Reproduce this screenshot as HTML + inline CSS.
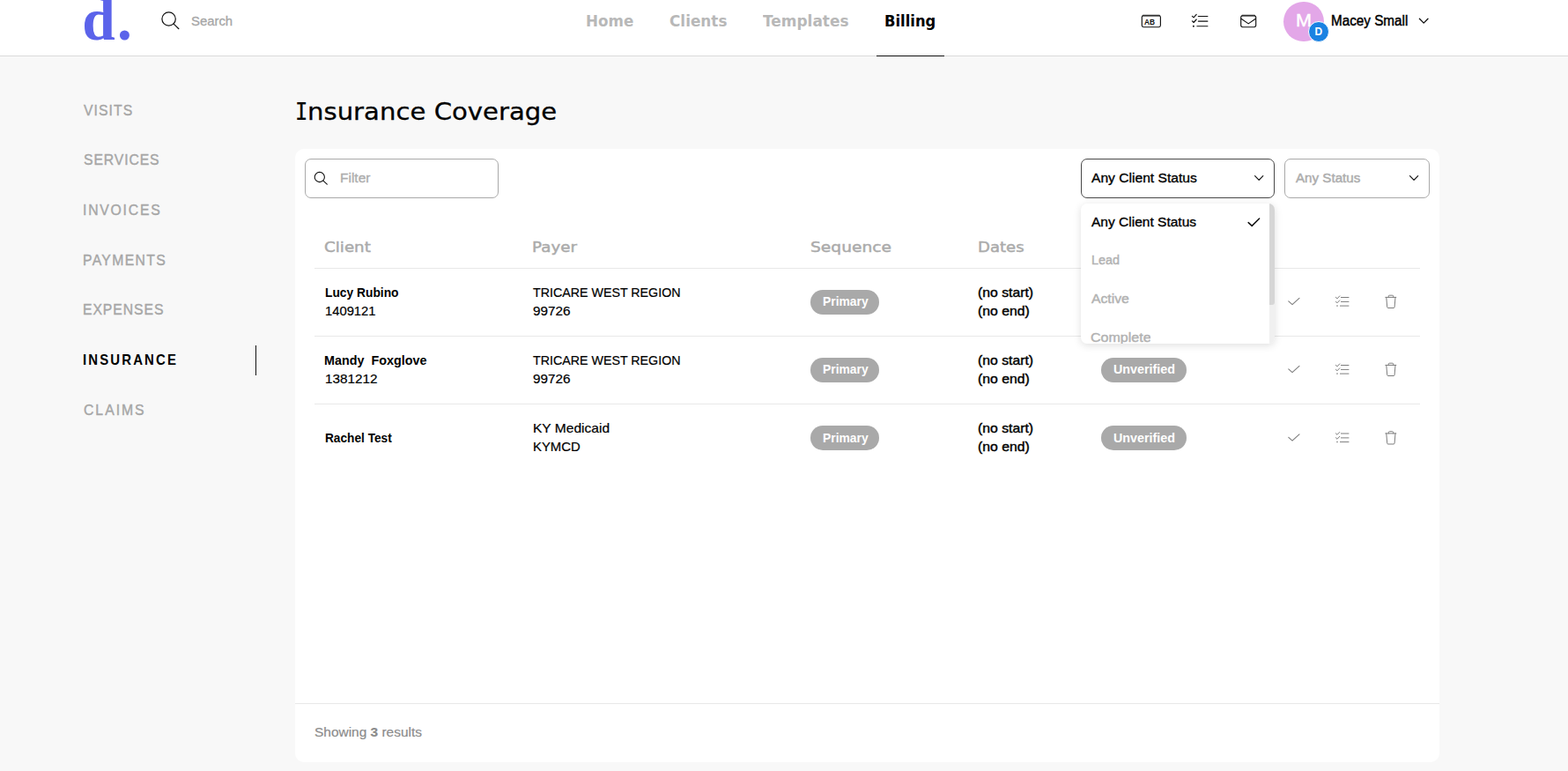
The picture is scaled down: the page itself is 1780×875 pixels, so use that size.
<!DOCTYPE html>
<html lang="en">
<head>
<meta charset="utf-8">
<title>Insurance Coverage</title>
<style>
*{box-sizing:border-box;margin:0;padding:0}
html,body{width:1780px;height:875px;overflow:hidden;background:#f8f8f8;font-family:"Liberation Sans",sans-serif;color:#000}
.abs{position:absolute}
.t{position:absolute;white-space:nowrap;line-height:1;transform-origin:0 0}
header{position:absolute;left:0;top:0;width:1780px;height:64px;background:#fff;border-bottom:1px solid #dadada}
.logo{left:93.2px;top:-11.2px;font-family:"Liberation Serif",serif;font-weight:bold;font-size:67.5px;color:#5b63ea;letter-spacing:2.2px}
.card{position:absolute;left:335px;top:169px;width:1299px;height:696px;background:#fff;border-radius:10px}
.box{position:absolute;height:45px;border:1px solid #a9a9a9;border-radius:7px;background:#fff}
.hr{position:absolute;left:357px;width:1255px;height:1px;background:#e8e8e8}
.pill{position:absolute;height:28px;border-radius:14px;background:#a9a9a9}
</style>
</head>
<body>
<header></header>
<div class="t logo">d.</div>
<svg class="abs" style="left:180px;top:10px" width="28" height="28" viewBox="0 0 28 28" fill="none" stroke="#111" stroke-width="1.2" stroke-linecap="round"><circle cx="11.6" cy="11.5" r="7.7"/><path d="M17.2 17.1l5.7 5.6"/></svg>
<div class="abs" style="left:995px;top:63px;width:77px;height:1px;background:#111"></div>

<!-- right icons -->
<svg class="abs" style="left:1290px;top:10px" width="145" height="30" viewBox="1290 10 145 30" fill="none" stroke="#111" stroke-width="1.15" stroke-linecap="round" stroke-linejoin="round">
<rect x="1296.3" y="17.7" width="21.1" height="13" rx="1.9"/><path d="M1297.6 17.6h18.5" stroke-width="1.7" stroke="#333"/>
<text x="1298.9" y="27.5" font-family="Liberation Sans, sans-serif" font-weight="bold" font-size="8.8" textLength="12.1" lengthAdjust="spacingAndGlyphs" fill="#111" stroke="none">AB</text>
<path d="M1360.3 18.5h10.6M1360.3 24.1h10.6M1358.9 29.7h12"/><path d="M1353.4 18.3l1.7 1.6l3.1 -3.5M1353.4 23.9l1.7 1.6l3.1 -3.5"/><circle cx="1354.9" cy="29.7" r="1" fill="#111" stroke="none"/>
<rect x="1408.7" y="17.7" width="17" height="13" rx="2.1"/><path d="M1410.2 17.6h14" stroke-width="1.7" stroke="#333"/><path d="M1409 21.3l8.2 5.6l8.2 -5.6"/>
</svg>
<div class="abs" style="left:1457.4px;top:1.5px;width:45.2px;height:45.2px;border-radius:50%;background:#e3a7e8"></div>
<div class="t" style="left:1471.2px;top:13.7px;font-size:19.6px;color:#fff;-webkit-text-stroke:.45px #fff;transform:scaleX(1.1)">M</div>
<div class="abs" style="left:1484.7px;top:23.7px;width:24.8px;height:24.8px;border-radius:50%;background:#1a82e2;border:1.4px solid #fff"></div>
<div class="t" style="left:1492.5px;top:30.2px;font-size:12px;font-weight:bold;color:#fff">D</div>
<svg class="abs" style="left:1609px;top:18px" width="14" height="12" viewBox="0 0 14 12" fill="none" stroke="#111" stroke-width="1.3" stroke-linecap="round" stroke-linejoin="round"><path d="M2.4 3.2l4.8 4.9 4.8-4.9"/></svg>

<div class="abs" style="left:290px;top:392px;width:1px;height:34px;background:#111"></div>

<div class="card"></div>
<div class="box" style="left:346px;top:180px;width:220px"></div>
<svg class="abs" style="left:356px;top:194px" width="18" height="18" viewBox="0 0 18 18" fill="none" stroke="#111" stroke-width="1.1" stroke-linecap="round"><circle cx="6.8" cy="7" r="5.6"/><path d="M10.9 11.1l4.4 4.1"/></svg>
<div class="box" style="left:1227px;top:180px;width:220px;border-color:#484848"></div>
<svg class="abs" style="left:1422px;top:196px" width="14" height="12" viewBox="0 0 14 12" fill="none" stroke="#111" stroke-width="1.15" stroke-linecap="round" stroke-linejoin="round"><path d="M2.6 3.6l4.6 4.7 4.6-4.7"/></svg>
<div class="box" style="left:1458px;top:180px;width:165px"></div>
<svg class="abs" style="left:1598px;top:196px" width="14" height="12" viewBox="0 0 14 12" fill="none" stroke="#111" stroke-width="1.15" stroke-linecap="round" stroke-linejoin="round"><path d="M2.5 3.6l4.6 4.7 4.6-4.7"/></svg>

<div class="hr" style="top:304px"></div>
<div class="hr" style="top:381px"></div>
<div class="hr" style="top:458px"></div>
<div class="pill" style="left:920px;top:329px;width:78px"></div>
<div class="pill" style="left:920px;top:406px;width:78px"></div>
<div class="pill" style="left:920px;top:483px;width:78px"></div>
<div class="pill" style="left:1250px;top:406px;width:97px"></div>
<div class="pill" style="left:1250px;top:483px;width:97px"></div>

<!-- row action icons -->
<svg class="abs" style="left:0;top:0;pointer-events:none" width="1780" height="875" viewBox="0 0 1780 875" fill="none" stroke="#7d7d7d" stroke-width="1" stroke-linecap="round" stroke-linejoin="round">

<g transform="translate(1469 342.5)"><path stroke-width="1.1" d="M-6.2 -0.7L-2 3.1L6 -4.2"/></g><g transform="translate(1524 342.5)"><path d="M-1.6 -5h8.6M-1.6 -0.1h8.6M-2.6 4.6h9.6"/><path stroke="#777" stroke-width="0.95" d="M-7.6 -5.2l1.6 1.6l2.8 -3M-7.6 -0.3l1.6 1.6l2.8 -3"/><circle cx="-6" cy="4.6" r="0.8" fill="#7d7d7d" stroke="none"/></g><g transform="translate(1579 342.5)"><path d="M-6.2 -5.1h12M-2.7 -5.1v-1.2q0 -1 1 -1h3.4q1 0 1 1v1.2M-5.2 -5.1l0.9 11q0.1 1.1 1.1 1.1h6.2q1 0 1.1 -1.1l0.9 -11"/></g>
<g transform="translate(1469 419.5)"><path stroke-width="1.1" d="M-6.2 -0.7L-2 3.1L6 -4.2"/></g><g transform="translate(1524 419.5)"><path d="M-1.6 -5h8.6M-1.6 -0.1h8.6M-2.6 4.6h9.6"/><path stroke="#777" stroke-width="0.95" d="M-7.6 -5.2l1.6 1.6l2.8 -3M-7.6 -0.3l1.6 1.6l2.8 -3"/><circle cx="-6" cy="4.6" r="0.8" fill="#7d7d7d" stroke="none"/></g><g transform="translate(1579 419.5)"><path d="M-6.2 -5.1h12M-2.7 -5.1v-1.2q0 -1 1 -1h3.4q1 0 1 1v1.2M-5.2 -5.1l0.9 11q0.1 1.1 1.1 1.1h6.2q1 0 1.1 -1.1l0.9 -11"/></g>
<g transform="translate(1469 497)"><path stroke-width="1.1" d="M-6.2 -0.7L-2 3.1L6 -4.2"/></g><g transform="translate(1524 497)"><path d="M-1.6 -5h8.6M-1.6 -0.1h8.6M-2.6 4.6h9.6"/><path stroke="#777" stroke-width="0.95" d="M-7.6 -5.2l1.6 1.6l2.8 -3M-7.6 -0.3l1.6 1.6l2.8 -3"/><circle cx="-6" cy="4.6" r="0.8" fill="#7d7d7d" stroke="none"/></g><g transform="translate(1579 497)"><path d="M-6.2 -5.1h12M-2.7 -5.1v-1.2q0 -1 1 -1h3.4q1 0 1 1v1.2M-5.2 -5.1l0.9 11q0.1 1.1 1.1 1.1h6.2q1 0 1.1 -1.1l0.9 -11"/></g>
</svg>

<!-- dropdown -->
<div class="abs" style="left:1227px;top:231px;width:220px;height:159px;background:#fff;border-radius:7px;box-shadow:0 2px 10px rgba(0,0,0,.13);overflow:hidden">
  <div class="abs" style="right:0;top:0;width:6px;height:159px;background:#f0f0f0"></div>
  <div class="abs" style="right:0;top:0;width:6px;height:115px;background:#d6d6d6;border-radius:0 3px 3px 0"></div>
</div>
<svg class="abs" style="left:1415px;top:245px" width="17" height="14" viewBox="0 0 17 14" fill="none" stroke="#111" stroke-width="1.5" stroke-linecap="round" stroke-linejoin="round"><path d="M2.2 7.6l4 3.8L14.6 3"/></svg>

<div class="abs" style="left:335px;top:798px;width:1299px;height:1px;background:#e8e8e8"></div>
<div id="search" class="t" style='left:216.90px;top:16.77px;font-size:14.8px;font-family:"Liberation Sans",sans-serif;color:#a6a6a6;-webkit-text-stroke:0.3px #a6a6a6;transform:scaleX(1.0056);'>Search</div>
<div id="nav1" class="t" style='left:665.34px;top:15.91px;font-size:17.0px;font-family:"DejaVu Sans","Liberation Sans",sans-serif;color:#b8b8b8;font-weight:bold;transform:scaleX(0.9834);'>Home</div>
<div id="nav2" class="t" style='left:760.39px;top:15.91px;font-size:17.0px;font-family:"DejaVu Sans","Liberation Sans",sans-serif;color:#b8b8b8;font-weight:bold;transform:scaleX(0.9918);'>Clients</div>
<div id="nav3" class="t" style='left:866.44px;top:15.91px;font-size:17.0px;font-family:"DejaVu Sans","Liberation Sans",sans-serif;color:#b8b8b8;font-weight:bold;transform:scaleX(0.9972);'>Templates</div>
<div id="nav4" class="t" style='left:1004.18px;top:15.91px;font-size:17.0px;font-family:"DejaVu Sans","Liberation Sans",sans-serif;color:#000;font-weight:bold;transform:scaleX(0.9635);'>Billing</div>
<div id="macey" class="t" style='left:1511.29px;top:15.76px;font-size:16.0px;font-family:"Liberation Sans",sans-serif;color:#000;-webkit-text-stroke:0.45px #000;transform:scaleX(0.9529);'>Macey Small</div>
<div id="side0" class="t" style='left:94.86px;top:118.25px;font-size:16.6px;font-family:"Liberation Sans",sans-serif;color:#a6a6a6;-webkit-text-stroke:0.4px #a6a6a6;letter-spacing:1.104px;transform:scaleX(0.9500);'>VISITS</div>
<div id="side1" class="t" style='left:94.63px;top:174.25px;font-size:16.6px;font-family:"Liberation Sans",sans-serif;color:#a6a6a6;-webkit-text-stroke:0.4px #a6a6a6;letter-spacing:0.924px;transform:scaleX(0.9500);'>SERVICES</div>
<div id="side2" class="t" style='left:94.38px;top:231.25px;font-size:16.6px;font-family:"Liberation Sans",sans-serif;color:#a6a6a6;-webkit-text-stroke:0.4px #a6a6a6;letter-spacing:1.864px;transform:scaleX(0.9500);'>INVOICES</div>
<div id="side3" class="t" style='left:93.80px;top:288.25px;font-size:16.6px;font-family:"Liberation Sans",sans-serif;color:#a6a6a6;-webkit-text-stroke:0.4px #a6a6a6;letter-spacing:1.409px;transform:scaleX(0.9500);'>PAYMENTS</div>
<div id="side4" class="t" style='left:93.80px;top:344.25px;font-size:16.6px;font-family:"Liberation Sans",sans-serif;color:#a6a6a6;-webkit-text-stroke:0.4px #a6a6a6;letter-spacing:0.963px;transform:scaleX(0.9500);'>EXPENSES</div>
<div id="side5" class="t" style='left:93.88px;top:401.25px;font-size:16.6px;font-family:"Liberation Sans",sans-serif;color:#000;font-weight:bold;letter-spacing:2.370px;transform:scaleX(0.9000);'>INSURANCE</div>
<div id="side6" class="t" style='left:94.80px;top:458.25px;font-size:16.6px;font-family:"Liberation Sans",sans-serif;color:#a6a6a6;-webkit-text-stroke:0.4px #a6a6a6;letter-spacing:2.093px;transform:scaleX(0.9500);'>CLAIMS</div>
<h1 style="font-weight:normal;font-size:27px"><span id="titleI" class="t" style='left:334.92px;top:113.19px;font-size:27.3px;font-family:"DejaVu Sans Mono","Liberation Mono",monospace;color:#000;-webkit-text-stroke:0.2px #000;transform:scaleX(0.8737);'>I</span><span id="title" class="t" style='left:348.76px;top:113.44px;font-size:27px;font-family:"DejaVu Sans","Liberation Sans",sans-serif;color:#000;-webkit-text-stroke:0.3px #000;transform:scaleX(1.0793);'>nsurance Coverage</span></h1>
<div id="filter" class="t" style='left:386.01px;top:194.43px;font-size:15.2px;font-family:"Liberation Sans",sans-serif;color:#adadad;-webkit-text-stroke:0.35px #adadad;transform:scaleX(1.0196);'>Filter</div>
<div id="th1" class="t" style='left:368.19px;top:272.93px;font-size:15.8px;font-family:"DejaVu Sans","Liberation Sans",sans-serif;color:#ababab;-webkit-text-stroke:0.45px #ababab;transform:scaleX(1.1550);'>Client</div>
<div id="th2" class="t" style='left:604.27px;top:272.93px;font-size:15.8px;font-family:"DejaVu Sans","Liberation Sans",sans-serif;color:#ababab;-webkit-text-stroke:0.45px #ababab;transform:scaleX(1.1558);'>Payer</div>
<div id="th3" class="t" style='left:920.36px;top:272.93px;font-size:15.8px;font-family:"DejaVu Sans","Liberation Sans",sans-serif;color:#ababab;-webkit-text-stroke:0.45px #ababab;transform:scaleX(1.1810);'>Sequence</div>
<div id="th4" class="t" style='left:1110.34px;top:272.93px;font-size:15.8px;font-family:"DejaVu Sans","Liberation Sans",sans-serif;color:#ababab;-webkit-text-stroke:0.45px #ababab;transform:scaleX(1.1447);'>Dates</div>
<div id="r1a" class="t" style='left:368.88px;top:323.60px;font-size:15.0px;font-family:"Liberation Sans",sans-serif;color:#000;font-weight:bold;transform:scaleX(0.9199);'>Lucy Rubino</div>
<div id="r1b" class="t" style='left:368.78px;top:346.53px;font-size:13.9px;font-family:"Liberation Sans",sans-serif;color:#000;-webkit-text-stroke:0.2px #000;transform:scaleX(1.0636);'>1409121</div>
<div id="r1c" class="t" style='left:604.67px;top:325.53px;font-size:13.9px;font-family:"Liberation Sans",sans-serif;color:#000;-webkit-text-stroke:0.2px #000;transform:scaleX(1.0253);'>TRICARE WEST REGION</div>
<div id="r1d" class="t" style='left:604.57px;top:346.53px;font-size:13.9px;font-family:"Liberation Sans",sans-serif;color:#000;-webkit-text-stroke:0.2px #000;transform:scaleX(1.1013);'>99726</div>
<div id="r1e" class="t" style='left:1109.93px;top:325.11px;font-size:14.4px;font-family:"Liberation Sans",sans-serif;color:#000;-webkit-text-stroke:0.4px #000;transform:scaleX(1.0951);'>(no start)</div>
<div id="r1f" class="t" style='left:1110.30px;top:346.11px;font-size:14.4px;font-family:"Liberation Sans",sans-serif;color:#000;-webkit-text-stroke:0.4px #000;transform:scaleX(1.0970);'>(no end)</div>
<div id="r2a" class="t" style='left:367.83px;top:400.60px;font-size:15.0px;font-family:"Liberation Sans",sans-serif;color:#000;font-weight:bold;transform:scaleX(0.9575);'>Mandy&nbsp; Foxglove</div>
<div id="r2b" class="t" style='left:369.08px;top:423.53px;font-size:13.9px;font-family:"Liberation Sans",sans-serif;color:#000;-webkit-text-stroke:0.2px #000;transform:scaleX(1.1002);'>1381212</div>
<div id="r2c" class="t" style='left:604.67px;top:402.53px;font-size:13.9px;font-family:"Liberation Sans",sans-serif;color:#000;-webkit-text-stroke:0.2px #000;transform:scaleX(1.0253);'>TRICARE WEST REGION</div>
<div id="r2d" class="t" style='left:604.57px;top:423.53px;font-size:13.9px;font-family:"Liberation Sans",sans-serif;color:#000;-webkit-text-stroke:0.2px #000;transform:scaleX(1.1013);'>99726</div>
<div id="r2e" class="t" style='left:1109.93px;top:402.11px;font-size:14.4px;font-family:"Liberation Sans",sans-serif;color:#000;-webkit-text-stroke:0.4px #000;transform:scaleX(1.0951);'>(no start)</div>
<div id="r2f" class="t" style='left:1110.30px;top:423.11px;font-size:14.4px;font-family:"Liberation Sans",sans-serif;color:#000;-webkit-text-stroke:0.4px #000;transform:scaleX(1.0970);'>(no end)</div>
<div id="r3a" class="t" style='left:368.79px;top:488.60px;font-size:15.0px;font-family:"Liberation Sans",sans-serif;color:#000;font-weight:bold;transform:scaleX(0.9116);'>Rachel Test</div>
<div id="r3c" class="t" style='left:604.82px;top:479.53px;font-size:13.9px;font-family:"Liberation Sans",sans-serif;color:#000;-webkit-text-stroke:0.2px #000;transform:scaleX(1.1198);'>KY Medicaid</div>
<div id="r3d" class="t" style='left:604.87px;top:500.53px;font-size:13.9px;font-family:"Liberation Sans",sans-serif;color:#000;-webkit-text-stroke:0.2px #000;transform:scaleX(1.0724);'>KYMCD</div>
<div id="r3e" class="t" style='left:1109.93px;top:479.11px;font-size:14.4px;font-family:"Liberation Sans",sans-serif;color:#000;-webkit-text-stroke:0.4px #000;transform:scaleX(1.0951);'>(no start)</div>
<div id="r3f" class="t" style='left:1110.30px;top:500.11px;font-size:14.4px;font-family:"Liberation Sans",sans-serif;color:#000;-webkit-text-stroke:0.4px #000;transform:scaleX(1.0970);'>(no end)</div>
<div id="p1" class="t" style='left:934.19px;top:334.18px;font-size:15.5px;font-family:"Liberation Sans",sans-serif;color:#fff;font-weight:bold;transform:scaleX(0.8941);'>Primary</div>
<div id="p2" class="t" style='left:934.19px;top:411.18px;font-size:15.5px;font-family:"Liberation Sans",sans-serif;color:#fff;font-weight:bold;transform:scaleX(0.8941);'>Primary</div>
<div id="p3" class="t" style='left:934.19px;top:489.18px;font-size:15.5px;font-family:"Liberation Sans",sans-serif;color:#fff;font-weight:bold;transform:scaleX(0.8941);'>Primary</div>
<div id="u2" class="t" style='left:1264.41px;top:411.18px;font-size:15.5px;font-family:"Liberation Sans",sans-serif;color:#fff;font-weight:bold;transform:scaleX(0.9229);'>Unverified</div>
<div id="u3" class="t" style='left:1264.41px;top:489.18px;font-size:15.5px;font-family:"Liberation Sans",sans-serif;color:#fff;font-weight:bold;transform:scaleX(0.9229);'>Unverified</div>
<div id="sel1" class="t" style='left:1239.30px;top:194.18px;font-size:15.5px;font-family:"Liberation Sans",sans-serif;color:#000;-webkit-text-stroke:0.35px #000;transform:scaleX(1.0073);'>Any Client Status</div>
<div id="sel2" class="t" style='left:1470.61px;top:194.18px;font-size:15.5px;font-family:"Liberation Sans",sans-serif;color:#adadad;-webkit-text-stroke:0.5px #adadad;transform:scaleX(0.9779);'>Any Status</div>
<div id="dd0" class="t" style='left:1238.72px;top:244.18px;font-size:15.5px;font-family:"Liberation Sans",sans-serif;color:#000;-webkit-text-stroke:0.35px #000;transform:scaleX(1.0012);'>Any Client Status</div>
<div id="dd1" class="t" style='left:1239.32px;top:287.18px;font-size:15.5px;font-family:"Liberation Sans",sans-serif;color:#b2b2b2;-webkit-text-stroke:0.45px #b2b2b2;transform:scaleX(0.9285);'>Lead</div>
<div id="dd2" class="t" style='left:1238.59px;top:331.18px;font-size:15.5px;font-family:"Liberation Sans",sans-serif;color:#b2b2b2;-webkit-text-stroke:0.45px #b2b2b2;transform:scaleX(1.0157);'>Active</div>
<div id="dd3" class="t" style='left:1238.39px;top:375.18px;font-size:15.5px;font-family:"Liberation Sans",sans-serif;color:#b2b2b2;-webkit-text-stroke:0.45px #b2b2b2;transform:scaleX(1.0336);height:14.82px;overflow:hidden;'>Complete</div>
<div id="foot" class="t" style='left:357.05px;top:824.03px;font-size:14.5px;font-family:"Liberation Sans",sans-serif;color:#8c8c8c;-webkit-text-stroke:0.2px #8c8c8c;transform:scaleX(1.0650);'>Showing <b>3</b> results</div>
</body>
</html>
